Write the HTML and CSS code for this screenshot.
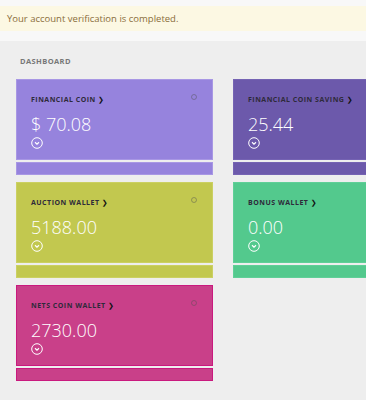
FILE: index.html
```html
<!DOCTYPE html>
<html>
<head>
<meta charset="utf-8">
<link rel="stylesheet" href="styles.css">
</head>
<body>
<div class="top">
  <div class="alert">Your account verification is completed.</div>
</div>
<div class="main">
  <div class="heading">DASHBOARD</div>
  <div class="grid">
    <div class="tile c1">
      <div class="card">
        <div class="title">FINANCIAL COIN <span class="chev">&#x276F;</span></div>
        <span class="dot"></span>
        <div class="value">$ 70.08</div>
        <svg class="down" width="12" height="12" viewBox="0 0 12 12"><circle cx="6" cy="6" r="5.3" fill="none" stroke="#fff" stroke-width="1"/><path d="M4 5.2 L6 7.1 L8 5.2" fill="none" stroke="#fff" stroke-width="1.2"/></svg>
      </div>
      <div class="strip"></div>
    </div>
    <div class="tile c2">
      <div class="card">
        <div class="title">FINANCIAL COIN SAVING <span class="chev">&#x276F;</span></div>
        <div class="value">25.44</div>
        <svg class="down" width="12" height="12" viewBox="0 0 12 12"><circle cx="6" cy="6" r="5.3" fill="none" stroke="#fff" stroke-width="1"/><path d="M4 5.2 L6 7.1 L8 5.2" fill="none" stroke="#fff" stroke-width="1.2"/></svg>
      </div>
      <div class="strip"></div>
    </div>
    <div class="tile c3">
      <div class="card">
        <div class="title">AUCTION WALLET <span class="chev">&#x276F;</span></div>
        <span class="dot"></span>
        <div class="value">5188.00</div>
        <svg class="down" width="12" height="12" viewBox="0 0 12 12"><circle cx="6" cy="6" r="5.3" fill="none" stroke="#fff" stroke-width="1"/><path d="M4 5.2 L6 7.1 L8 5.2" fill="none" stroke="#fff" stroke-width="1.2"/></svg>
      </div>
      <div class="strip"></div>
    </div>
    <div class="tile c4">
      <div class="card">
        <div class="title">BONUS WALLET <span class="chev">&#x276F;</span></div>
        <div class="value">0.00</div>
        <svg class="down" width="12" height="12" viewBox="0 0 12 12"><circle cx="6" cy="6" r="5.3" fill="none" stroke="#fff" stroke-width="1"/><path d="M4 5.2 L6 7.1 L8 5.2" fill="none" stroke="#fff" stroke-width="1.2"/></svg>
      </div>
      <div class="strip"></div>
    </div>
    <div class="tile c5">
      <div class="card">
        <div class="title">NETS COIN WALLET <span class="chev">&#x276F;</span></div>
        <span class="dot"></span>
        <div class="value">2730.00</div>
        <svg class="down" width="12" height="12" viewBox="0 0 12 12"><circle cx="6" cy="6" r="5.3" fill="none" stroke="#fff" stroke-width="1"/><path d="M4 5.2 L6 7.1 L8 5.2" fill="none" stroke="#fff" stroke-width="1.2"/></svg>
      </div>
      <div class="strip"></div>
    </div>
  </div>
</div>
</body>
</html>
```
FILE: styles.css
```css
html, body {
  margin: 0;
  padding: 0;
  width: 366px;
  height: 400px;
  overflow: hidden;
  background: #eeeeee;
  font-family: "Open Sans", "DejaVu Sans", sans-serif;
}
.top {
  background: #f8f8f8;
  padding: 6px 0 10px;
}
.alert {
  background: #fcf8e3;
  color: #8a6d3b;
  font-size: 9.5px;
  height: 25px;
  line-height: 25px;
  padding: 0 7px;
}
.main {
  padding: 15px 0 0 16px;
}
.heading {
  font-size: 7.5px;
  font-weight: 700;
  color: #777;
  letter-spacing: 0.4px;
  padding-left: 4px;
  height: 10px;
  line-height: 10px;
  margin-bottom: 13px;
}
.grid {
  display: grid;
  grid-template-columns: 197px 1fr;
  column-gap: 20px;
  row-gap: 7px;
}
.tile {
  display: flex;
  flex-direction: column;
  gap: 2px;
}
.card {
  position: relative;
  height: 81px;
  box-sizing: border-box;
  padding: 15px 14px 0;
  display: flex;
  flex-direction: column;
  align-items: flex-start;
}
.strip {
  height: 13px;
  box-sizing: border-box;
}
.title {
  font-size: 7px;
  font-weight: 700;
  color: #2e2a3a;
  letter-spacing: 0.5px;
  line-height: 10px;
  white-space: nowrap;
}
.chev {
  font-size: 7px;
  font-weight: 700;
  color: #111;
}
.value {
  font-weight: 300;
  font-size: 18px;
  color: #fff;
  line-height: 22px;
  margin-top: 8px;
}
.down {
  display: block;
  margin-top: 2px;
}
.dot {
  position: absolute;
  right: 15px;
  top: 14px;
  width: 4px;
  height: 4px;
  border-radius: 50%;
  border: 1px solid rgba(80, 80, 80, 0.45);
}
.c1 .card, .c1 .strip { background: #9683dd; border: 1px solid #a897e4; }
.c2 .card, .c2 .strip { background: #6c59ab; border: 1px solid #7563b3; border-right: none; }
.c3 .card, .c3 .strip { background: #c2c84f; border: 1px solid #cbd062; }
.c4 .card, .c4 .strip { background: #53c98d; border: 1px solid #5fcf97; border-right: none; }
.c5 .card, .c5 .strip { background: #c94089; border: 1px solid #c9197e; }
```
